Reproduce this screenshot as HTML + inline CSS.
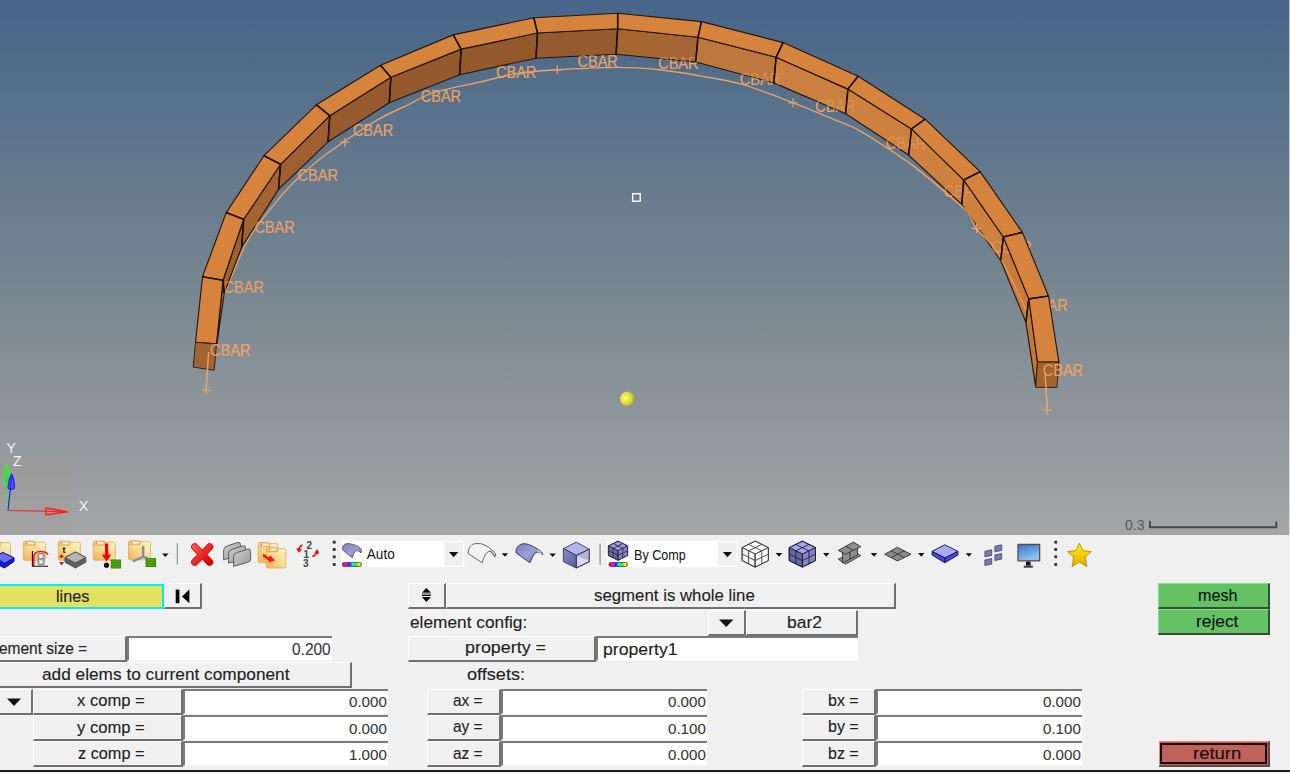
<!DOCTYPE html>
<html><head><meta charset="utf-8"><style>
*{margin:0;padding:0;box-sizing:border-box}
html,body{width:1290px;height:773px;overflow:hidden;background:#f0f0f0;font-family:"Liberation Sans",sans-serif;position:relative}
.a{position:absolute}
.btn{position:absolute;background:#f0f0f0;border-top:1px solid #fff;border-left:1px solid #fff;border-bottom:2px solid #707070;border-right:2px solid #707070}
.inp{position:absolute;background:#fff;border-top:2px solid #7a7a7a;border-left:2px solid #7a7a7a;border-bottom:1px solid #f6f6f6}
.t{position:absolute;white-space:pre;transform-origin:0 0;-webkit-text-stroke:0.12px currentColor}
.btn.g{background:#62c264;border-top-color:#86e086;border-left-color:#86e086;border-bottom-color:#3a4a3a;border-right-color:#3a4a3a}
.btn.r{background:#c0625a;border-top-color:#e08a84;border-left-color:#e08a84;border-bottom-color:#5a4a4a;border-right-color:#5a4a4a}
</style></head><body>
<div class="a" style="left:1289px;top:0;width:1px;height:535px;background:linear-gradient(#b4bcc8,#dcdcdc)"></div>
<div class="a" style="left:0;top:0;width:1290px;height:535px;overflow:hidden">
<svg width="1289" height="535" viewBox="0 0 1289 535" style="position:absolute;left:0;top:0">
<defs><linearGradient id="bg" x1="0" y1="0" x2="0" y2="1">
<stop offset="0" stop-color="#466589"/><stop offset="0.5" stop-color="#74848f"/><stop offset="1" stop-color="#a5a5a5"/></linearGradient>
<linearGradient id="tri" x1="0" y1="0" x2="0" y2="1"><stop offset="0" stop-color="#999999"/><stop offset="1" stop-color="#a4a4a4"/></linearGradient>
<radialGradient id="ball" cx="0.35" cy="0.45" r="0.7"><stop offset="0" stop-color="#ffff60"/><stop offset="0.6" stop-color="#d8d840"/><stop offset="1" stop-color="#a0a030"/></radialGradient>
</defs>
<rect width="1289" height="535" fill="url(#bg)"/>
<path d="M206.1,390.1 C206.3,385.9 207.1,371.7 207.5,365.0 C207.9,358.3 207.8,356.2 208.6,350.0 C209.3,343.8 209.6,336.7 212.0,328.0 C214.4,319.3 217.0,312.7 223.0,298.0 C229.0,283.3 238.9,256.3 248.0,240.0 C257.1,223.7 269.4,210.3 277.8,200.0 C286.2,189.7 290.9,185.1 298.2,178.0 C305.5,170.9 313.7,163.8 321.5,157.7 C329.3,151.6 335.8,147.3 344.8,141.2 C353.9,135.0 365.8,126.6 375.8,120.8 C385.8,115.0 395.2,111.0 404.9,106.3 C414.6,101.6 421.5,96.8 434.0,92.7 C446.5,88.7 465.7,85.3 480.0,82.0 C494.3,78.7 507.1,74.9 520.0,72.9 C532.9,70.9 541.2,70.7 557.2,69.8 C573.2,68.9 599.1,67.4 616.1,67.4 C633.1,67.4 645.5,68.4 659.5,69.8 C673.5,71.2 686.4,73.5 700.0,75.9 C713.6,78.3 725.9,79.7 741.4,84.2 C756.9,88.7 776.7,96.5 793.1,102.8 C809.5,109.1 829.2,117.3 840.0,121.8 C850.8,126.3 852.1,126.7 858.1,129.9 C864.1,133.1 870.2,137.0 876.2,140.8 C882.2,144.6 888.2,148.5 894.3,152.6 C900.3,156.7 906.5,160.8 912.5,165.3 C918.5,169.8 924.6,174.7 930.6,179.7 C936.6,184.7 942.7,189.8 948.7,195.1 C954.7,200.4 962.1,205.8 966.8,211.4 C971.5,217.0 972.3,222.4 976.8,228.5 C981.3,234.6 988.8,240.4 994.0,247.7 C999.2,254.9 1002.6,261.5 1008.0,272.0 C1013.4,282.5 1021.0,297.5 1026.3,310.5 C1031.6,323.5 1036.9,339.1 1040.0,350.0 C1043.1,360.9 1043.8,365.7 1045.0,375.7 C1046.2,385.7 1047.0,404.2 1047.4,409.9" fill="none" stroke="#e9a064" stroke-width="1.4"/>
<path d="M201.6,390.1h9M206.1,385.6v9" stroke="#e9a064" stroke-width="1.3"/><path d="M340.3,142.2h9M344.8,137.7v9" stroke="#e9a064" stroke-width="1.3"/><path d="M552.7,69.8h9M557.2,65.3v9" stroke="#e9a064" stroke-width="1.3"/><path d="M788.6,102.8h9M793.1,98.3v9" stroke="#e9a064" stroke-width="1.3"/><path d="M972.3,228.5h9M976.8,224.0v9" stroke="#e9a064" stroke-width="1.3"/><path d="M1042.9,409.9h9M1047.4,405.4v9" stroke="#e9a064" stroke-width="1.3"/>
<g font-family="Liberation Sans, sans-serif" font-size="16" fill="#e6a068"><text x="210.1" y="355.9" textLength="40.3" lengthAdjust="spacingAndGlyphs">CBAR</text><text x="223.6" y="292.8" textLength="40.3" lengthAdjust="spacingAndGlyphs">CBAR</text><text x="254.4" y="233.1" textLength="40.3" lengthAdjust="spacingAndGlyphs">CBAR</text><text x="297.6" y="181.0" textLength="40.3" lengthAdjust="spacingAndGlyphs">CBAR</text><text x="352.9" y="136.3" textLength="40.3" lengthAdjust="spacingAndGlyphs">CBAR</text><text x="420.8" y="102.4" textLength="40.3" lengthAdjust="spacingAndGlyphs">CBAR</text><text x="496.0" y="78.3" textLength="40.3" lengthAdjust="spacingAndGlyphs">CBAR</text><text x="577.5" y="66.7" textLength="40.3" lengthAdjust="spacingAndGlyphs">CBAR</text><text x="658.2" y="69.0" textLength="40.3" lengthAdjust="spacingAndGlyphs">CBAR</text><text x="739.8" y="85.2" textLength="40.3" lengthAdjust="spacingAndGlyphs">CBAR</text><text x="815.3" y="112.1" textLength="40.3" lengthAdjust="spacingAndGlyphs">CBAR</text><text x="885.7" y="149.4" textLength="40.3" lengthAdjust="spacingAndGlyphs">CBAR</text><text x="943.7" y="197.0" textLength="40.3" lengthAdjust="spacingAndGlyphs">CBAR</text><text x="991.4" y="253.0" textLength="40.3" lengthAdjust="spacingAndGlyphs">CBAR</text><text x="1027.4" y="310.5" textLength="40.3" lengthAdjust="spacingAndGlyphs">CBAR</text><text x="1042.8" y="375.7" textLength="40.3" lengthAdjust="spacingAndGlyphs">CBAR</text></g>
<polygon points="216.5,343.9 223.0,280.2 224.3,293.0 216.8,344.5" fill="#a0602e" stroke="#24160c" stroke-width="1.15" stroke-linejoin="round"/>
<polygon points="223.0,280.2 243.7,219.3 241.7,247.0 224.3,293.0" fill="#a0602e" stroke="#24160c" stroke-width="1.15" stroke-linejoin="round"/>
<polygon points="243.7,219.3 280.6,164.3 278.5,189.4 241.7,247.0" fill="#a56330" stroke="#24160c" stroke-width="1.15" stroke-linejoin="round"/>
<polygon points="280.6,164.3 329.8,115.7 328.1,141.8 278.5,189.4" fill="#9e6030" stroke="#24160c" stroke-width="1.15" stroke-linejoin="round"/>
<polygon points="329.8,115.7 390.9,77.3 389.3,102.7 328.1,141.8" fill="#965c2e" stroke="#24160c" stroke-width="1.15" stroke-linejoin="round"/>
<polygon points="390.9,77.3 461.1,49.1 459.6,74.7 389.3,102.7" fill="#945a2d" stroke="#24160c" stroke-width="1.15" stroke-linejoin="round"/>
<polygon points="461.1,49.1 537.5,33.0 536.0,58.2 459.6,74.7" fill="#93592d" stroke="#24160c" stroke-width="1.15" stroke-linejoin="round"/>
<polygon points="537.5,33.0 617.7,28.7 616.1,54.3 536.0,58.2" fill="#955a2d" stroke="#24160c" stroke-width="1.15" stroke-linejoin="round"/>
<polygon points="617.7,28.7 698.0,37.2 695.7,62.0 616.1,54.3" fill="#a66634" stroke="#24160c" stroke-width="1.15" stroke-linejoin="round"/>
<polygon points="698.0,37.2 776.1,57.3 773.8,82.9 695.7,62.0" fill="#be783e" stroke="#24160c" stroke-width="1.15" stroke-linejoin="round"/>
<polygon points="776.1,57.3 847.9,89.1 845.7,113.7 773.8,82.9" fill="#c98040" stroke="#24160c" stroke-width="1.15" stroke-linejoin="round"/>
<polygon points="847.9,89.1 911.5,128.9 908.6,155.1 845.7,113.7" fill="#ce803e" stroke="#24160c" stroke-width="1.15" stroke-linejoin="round"/>
<polygon points="911.5,128.9 963.7,180.1 961.8,204.5 908.6,155.1" fill="#ce803e" stroke="#24160c" stroke-width="1.15" stroke-linejoin="round"/>
<polygon points="963.7,180.1 1003.4,237.0 1000.7,260.5 961.8,204.5" fill="#ce803e" stroke="#24160c" stroke-width="1.15" stroke-linejoin="round"/>
<polygon points="1003.4,237.0 1028.8,298.9 1025.9,322.4 1000.7,260.5" fill="#c87c3c" stroke="#24160c" stroke-width="1.15" stroke-linejoin="round"/>
<polygon points="1028.8,298.9 1037.5,362.1 1035.6,386.4 1025.9,322.4" fill="#c4783a" stroke="#24160c" stroke-width="1.15" stroke-linejoin="round"/>
<path d="M912.5,165.3 C915.5,167.7 924.6,174.7 930.6,179.7 C936.6,184.7 942.7,189.8 948.7,195.1 C954.7,200.4 962.1,205.8 966.8,211.4 C971.5,217.0 972.3,222.4 976.8,228.5 C981.3,234.6 988.8,240.4 994.0,247.7 C999.2,254.9 1002.6,261.5 1008.0,272.0 C1013.4,282.5 1023.2,304.1 1026.3,310.5" fill="none" stroke="#e9a064" stroke-width="1.3" opacity="0.85"/>
<g font-family="Liberation Sans, sans-serif" font-size="16" fill="#e6a068"><text x="210.1" y="355.9" textLength="40.3" lengthAdjust="spacingAndGlyphs" fill-opacity="0.6">CBAR</text><text x="223.6" y="292.8" textLength="40.3" lengthAdjust="spacingAndGlyphs" fill-opacity="0.6">CBAR</text><text x="254.4" y="233.1" textLength="40.3" lengthAdjust="spacingAndGlyphs" fill-opacity="0.6">CBAR</text><text x="297.6" y="181.0" textLength="40.3" lengthAdjust="spacingAndGlyphs" fill-opacity="0.6">CBAR</text><text x="352.9" y="136.3" textLength="40.3" lengthAdjust="spacingAndGlyphs" fill-opacity="0.6">CBAR</text><text x="420.8" y="102.4" textLength="40.3" lengthAdjust="spacingAndGlyphs" fill-opacity="0.6">CBAR</text><text x="496.0" y="78.3" textLength="40.3" lengthAdjust="spacingAndGlyphs" fill-opacity="0.6">CBAR</text><text x="577.5" y="66.7" textLength="40.3" lengthAdjust="spacingAndGlyphs" fill-opacity="0.6">CBAR</text><text x="658.2" y="69.0" textLength="40.3" lengthAdjust="spacingAndGlyphs" fill-opacity="0.6">CBAR</text><text x="739.8" y="85.2" textLength="40.3" lengthAdjust="spacingAndGlyphs" fill-opacity="0.6">CBAR</text><text x="815.3" y="112.1" textLength="40.3" lengthAdjust="spacingAndGlyphs" fill-opacity="0.6">CBAR</text><text x="885.7" y="149.4" textLength="40.3" lengthAdjust="spacingAndGlyphs" fill-opacity="0.6">CBAR</text><text x="943.7" y="197.0" textLength="40.3" lengthAdjust="spacingAndGlyphs" fill-opacity="0.6">CBAR</text><text x="991.4" y="253.0" textLength="40.3" lengthAdjust="spacingAndGlyphs" fill-opacity="0.6">CBAR</text><text x="1027.4" y="310.5" textLength="40.3" lengthAdjust="spacingAndGlyphs" fill-opacity="0.6">CBAR</text><text x="1042.8" y="375.7" textLength="40.3" lengthAdjust="spacingAndGlyphs" fill-opacity="0.6">CBAR</text></g>
<polygon points="195.5,342.3 202.5,276.8 223.0,280.2 216.5,343.9" fill="#d6833e" stroke="#24160c" stroke-width="1.15" stroke-linejoin="round"/>
<polygon points="202.5,276.8 226.2,212.6 243.7,219.3 223.0,280.2" fill="#d6833e" stroke="#24160c" stroke-width="1.15" stroke-linejoin="round"/>
<polygon points="226.2,212.6 264.0,155.7 280.6,164.3 243.7,219.3" fill="#d6833e" stroke="#24160c" stroke-width="1.15" stroke-linejoin="round"/>
<polygon points="264.0,155.7 316.4,104.8 329.8,115.7 280.6,164.3" fill="#d6833e" stroke="#24160c" stroke-width="1.15" stroke-linejoin="round"/>
<polygon points="316.4,104.8 380.5,65.3 390.9,77.3 329.8,115.7" fill="#d6833e" stroke="#24160c" stroke-width="1.15" stroke-linejoin="round"/>
<polygon points="380.5,65.3 453.2,34.9 461.1,49.1 390.9,77.3" fill="#d6833e" stroke="#24160c" stroke-width="1.15" stroke-linejoin="round"/>
<polygon points="453.2,34.9 533.8,17.8 537.5,33.0 461.1,49.1" fill="#d6833e" stroke="#24160c" stroke-width="1.15" stroke-linejoin="round"/>
<polygon points="533.8,17.8 617.7,13.2 617.7,28.7 537.5,33.0" fill="#d6833e" stroke="#24160c" stroke-width="1.15" stroke-linejoin="round"/>
<polygon points="617.7,13.2 701.5,21.6 698.0,37.2 617.7,28.7" fill="#d6833e" stroke="#24160c" stroke-width="1.15" stroke-linejoin="round"/>
<polygon points="701.5,21.6 783.1,42.6 776.1,57.3 698.0,37.2" fill="#d6833e" stroke="#24160c" stroke-width="1.15" stroke-linejoin="round"/>
<polygon points="783.1,42.6 858.2,76.2 847.9,89.1 776.1,57.3" fill="#d6833e" stroke="#24160c" stroke-width="1.15" stroke-linejoin="round"/>
<polygon points="858.2,76.2 925.1,119.2 911.5,128.9 847.9,89.1" fill="#d6833e" stroke="#24160c" stroke-width="1.15" stroke-linejoin="round"/>
<polygon points="925.1,119.2 980.1,171.7 963.7,180.1 911.5,128.9" fill="#d6833e" stroke="#24160c" stroke-width="1.15" stroke-linejoin="round"/>
<polygon points="980.1,171.7 1022.4,232.4 1003.4,237.0 963.7,180.1" fill="#d6833e" stroke="#24160c" stroke-width="1.15" stroke-linejoin="round"/>
<polygon points="1022.4,232.4 1048.5,296.0 1028.8,298.9 1003.4,237.0" fill="#d6833e" stroke="#24160c" stroke-width="1.15" stroke-linejoin="round"/>
<polygon points="1048.5,296.0 1058.9,362.1 1037.5,362.1 1028.8,298.9" fill="#d6833e" stroke="#24160c" stroke-width="1.15" stroke-linejoin="round"/>
<polygon points="195.5,342.3 216.5,343.9 214.2,370.2 193.2,367.1" fill="#a26532" stroke="#2a1a10" stroke-width="0.9"/>
<polygon points="1037.5,362.1 1058.9,362.1 1056.9,387.4 1035.6,387.4" fill="#a26532" stroke="#2a1a10" stroke-width="0.9"/>
<polyline points="202.5,276.8 223.0,280.2 224.3,293.0" fill="none" stroke="#1e120a" stroke-width="1.6"/>
<polyline points="226.2,212.6 243.7,219.3 241.7,247.0" fill="none" stroke="#1e120a" stroke-width="1.6"/>
<polyline points="264.0,155.7 280.6,164.3 278.5,189.4" fill="none" stroke="#1e120a" stroke-width="1.6"/>
<polyline points="316.4,104.8 329.8,115.7 328.1,141.8" fill="none" stroke="#1e120a" stroke-width="1.6"/>
<polyline points="380.5,65.3 390.9,77.3 389.3,102.7" fill="none" stroke="#1e120a" stroke-width="1.6"/>
<polyline points="453.2,34.9 461.1,49.1 459.6,74.7" fill="none" stroke="#1e120a" stroke-width="1.6"/>
<polyline points="533.8,17.8 537.5,33.0 536.0,58.2" fill="none" stroke="#1e120a" stroke-width="1.6"/>
<polyline points="617.7,13.2 617.7,28.7 616.1,54.3" fill="none" stroke="#1e120a" stroke-width="1.6"/>
<polyline points="701.5,21.6 698.0,37.2 695.7,62.0" fill="none" stroke="#1e120a" stroke-width="1.6"/>
<polyline points="783.1,42.6 776.1,57.3 773.8,82.9" fill="none" stroke="#1e120a" stroke-width="1.6"/>
<polyline points="858.2,76.2 847.9,89.1 845.7,113.7" fill="none" stroke="#1e120a" stroke-width="1.6"/>
<polyline points="925.1,119.2 911.5,128.9 908.6,155.1" fill="none" stroke="#1e120a" stroke-width="1.6"/>
<polyline points="980.1,171.7 963.7,180.1 961.8,204.5" fill="none" stroke="#1e120a" stroke-width="1.6"/>
<polyline points="1022.4,232.4 1003.4,237.0 1000.7,260.5" fill="none" stroke="#1e120a" stroke-width="1.6"/>
<polyline points="1048.5,296.0 1028.8,298.9 1025.9,322.4" fill="none" stroke="#1e120a" stroke-width="1.6"/>
<g font-family="Liberation Sans, sans-serif" font-size="16" fill="#e6a068"><text x="210.1" y="355.9" textLength="40.3" lengthAdjust="spacingAndGlyphs">CBAR</text><text x="1042.8" y="375.7" textLength="40.3" lengthAdjust="spacingAndGlyphs">CBAR</text></g>
<path d="M206.1,390.1 L208.6,352" fill="none" stroke="#e9a064" stroke-width="1.4"/>
<path d="M972.3,228.5h9M976.8,224v9" stroke="#e9a064" stroke-width="1.3"/>
<path d="M1045,372 L1047.4,409.9" fill="none" stroke="#e9a064" stroke-width="1.4"/>
<rect x="632.7" y="193.7" width="7.5" height="7.5" fill="none" stroke="#f4f4f4" stroke-width="1.5"/>
<circle cx="627.3" cy="398.8" r="7.2" fill="url(#ball)"/>
<rect x="0" y="463" width="72" height="71" fill="url(#tri)"/>
<g stroke-width="1.2" fill="none">
<path d="M8,510.5 L67.6,511.7" stroke="#ff2020"/>
<path d="M46,508 L67.6,511.7 L46,514.8 Z" stroke="#ff2020" stroke-width="1.6"/>
<path d="M8,510.5 L6.8,466" stroke="#20ff20"/>
<path d="M3.5,483 C4,475 5.5,468 6.8,464 C8,468 9.5,475 9.8,483 L6.8,485 Z" stroke="#20ff20" fill="#40d040" fill-opacity="0.5"/>
<path d="M8,510.5 L11.7,476" stroke="#2020ff"/>
<path d="M8,488 C8.5,482 10.5,476 11.7,474.2 C12.8,476 14.5,482 14.5,488 C13,490 10,490 8,488 Z" stroke="#2020ff" fill="#3030f0" fill-opacity="0.7"/>
</g>
<g font-family="Liberation Sans, sans-serif" font-size="14" fill="#f4f4f4">
<text x="6.5" y="453">Y</text><text x="13" y="466">Z</text><text x="79" y="511">X</text></g>
<text x="1125" y="530" font-family="Liberation Sans, sans-serif" font-size="14" fill="#5a5a5a">0.3</text>
<path d="M1150,521 V527.2 H1276.3 V521.5" fill="none" stroke="#4a4a4a" stroke-width="2"/>
</svg>
</div>
<svg class="a" style="left:0;top:0" width="1290" height="773" viewBox="0 0 1290 773"><defs>
<linearGradient id="fg" x1="1" y1="0" x2="0" y2="1"><stop offset="0" stop-color="#fdf4c8"/><stop offset="0.5" stop-color="#f8dc90"/><stop offset="1" stop-color="#f0b050"/></linearGradient>
<linearGradient id="rb" x1="0" y1="0" x2="1" y2="0"><stop offset="0" stop-color="#ff0000"/><stop offset="0.2" stop-color="#ff00ff"/><stop offset="0.38" stop-color="#2020ff"/><stop offset="0.55" stop-color="#00ffff"/><stop offset="0.72" stop-color="#00ff00"/><stop offset="0.88" stop-color="#ffff00"/><stop offset="1" stop-color="#ffa000"/></linearGradient>
<linearGradient id="surf" x1="0" y1="0" x2="1" y2="1"><stop offset="0" stop-color="#7c7ec0"/><stop offset="0.5" stop-color="#9c9ed4"/><stop offset="1" stop-color="#6a6cae"/></linearGradient>
<linearGradient id="scr" x1="0" y1="0" x2="0.4" y2="1"><stop offset="0" stop-color="#3a78c8"/><stop offset="1" stop-color="#8cc4ec"/></linearGradient>
<linearGradient id="cubel" x1="0" y1="0" x2="1" y2="1"><stop offset="0" stop-color="#8a8ac8"/><stop offset="1" stop-color="#5e5e9c"/></linearGradient>
<linearGradient id="star" x1="0" y1="0" x2="0" y2="1"><stop offset="0" stop-color="#fff000"/><stop offset="1" stop-color="#eca800"/></linearGradient>
<linearGradient id="xg" x1="0" y1="0" x2="1" y2="1"><stop offset="0" stop-color="#ff5050"/><stop offset="1" stop-color="#d80000"/></linearGradient>
<linearGradient id="gf" x1="0" y1="0" x2="1" y2="1"><stop offset="0" stop-color="#d0d0d0"/><stop offset="1" stop-color="#989898"/></linearGradient>
</defs><rect x="-11.5" y="542.6" width="22.0" height="18.2" rx="1.6" fill="url(#fg)" stroke="#dcae62" stroke-width="0.8"/><path d="M-11.2,545.7 v-2.6 q0,-1.4 1.4,-1.4 h8.6 q1.4,0 1.4,1.4 v2.6 z" fill="#f2d084" stroke="#d4a458" stroke-width="0.8"/><rect x="-9.1" y="542.9" width="7.6" height="1.6" fill="#faf0e4"/><rect x="-9.1" y="542.9" width="1.6" height="1.6" fill="#f07070"/><path d="M-5,557.5 L2.6,552.5 L14,557.8 L14,561.5 L4.4,568 L-5,563 Z" fill="#1818e0" stroke="#000080" stroke-width="0.9" stroke-linejoin="round"/><path d="M-5,557.5 L2.6,552.5 L14,557.8 L4.8,563.2 Z" fill="#7070f4" stroke="#000080" stroke-width="0.7"/><rect x="23.4" y="542.1" width="22.0" height="18.2" rx="1.6" fill="url(#fg)" stroke="#dcae62" stroke-width="0.8"/><path d="M23.7,545.2 v-2.6 q0,-1.4 1.4,-1.4 h8.6 q1.4,0 1.4,1.4 v2.6 z" fill="#f2d084" stroke="#d4a458" stroke-width="0.8"/><rect x="25.8" y="542.4" width="7.6" height="1.6" fill="#faf0e4"/><rect x="25.8" y="542.4" width="1.6" height="1.6" fill="#f07070"/><path d="M32.4,551 V566.3 H48" fill="none" stroke="#111" stroke-width="1.1"/><path d="M38,553.5 h6 v11 h-6 z M38,559 h6" fill="#c0c0c0" stroke="#808080" stroke-width="1"/><rect x="39.6" y="554.8" width="2.8" height="2.8" fill="#f4f4f4"/><rect x="39.6" y="560.5" width="2.8" height="2.8" fill="#f4f4f4"/><path d="M33.8,566 L33.8,557.5 C33.8,553.5 36.5,551.4 40.5,551.4 C44.5,551.4 47,552.6 48,554.6" fill="none" stroke="#ff1010" stroke-width="1.5"/><rect x="58.3" y="542.1" width="22.0" height="18.2" rx="1.6" fill="url(#fg)" stroke="#dcae62" stroke-width="0.8"/><path d="M58.6,545.2 v-2.6 q0,-1.4 1.4,-1.4 h8.6 q1.4,0 1.4,1.4 v2.6 z" fill="#f2d084" stroke="#d4a458" stroke-width="0.8"/><rect x="60.7" y="542.4" width="7.6" height="1.6" fill="#faf0e4"/><rect x="60.7" y="542.4" width="1.6" height="1.6" fill="#f07070"/><text x="62.6" y="553.3" font-family="Liberation Sans" font-weight="bold" font-size="9" fill="#111">t</text><path d="M59.5,557 h4 M61.5,554.5 l-1.5,2.5 h3 z M59.5,562.5 h4 M61.5,565 l-1.5,-2.5 h3 z" stroke="#c01010" fill="#c01010" stroke-width="0.8"/><path d="M65,557.5 L75.5,552 L85.8,557.5 L85.8,562.2 L75.5,568 L65,562.2 Z" fill="#606060" stroke="#404040" stroke-width="0.8"/><path d="M65,557.5 L75.5,552 L85.8,557.5 L75.5,563 Z" fill="#b4b4b4" stroke="#404040" stroke-width="0.8"/><rect x="93.2" y="542.1" width="22.0" height="18.2" rx="1.6" fill="url(#fg)" stroke="#dcae62" stroke-width="0.8"/><path d="M93.5,545.2 v-2.6 q0,-1.4 1.4,-1.4 h8.6 q1.4,0 1.4,1.4 v2.6 z" fill="#f2d084" stroke="#d4a458" stroke-width="0.8"/><rect x="95.6" y="542.4" width="7.6" height="1.6" fill="#faf0e4"/><rect x="95.6" y="542.4" width="1.6" height="1.6" fill="#f07070"/><path d="M105,543.6 h3.2 v11 h3.2 l-4.8,7 l-4.8,-7 h3.2 z" fill="#ff0000"/><circle cx="106.5" cy="565.2" r="2.6" fill="#111"/><rect x="111.2" y="560" width="9.2" height="8" fill="#50b010" stroke="#2e7a00" stroke-width="0.9"/><path d="M112,562.7 h7.6 M112,565.3 h7.6" stroke="#2e7a00" stroke-width="0.9"/><rect x="128.5" y="541.6" width="22.0" height="18.2" rx="1.6" fill="url(#fg)" stroke="#dcae62" stroke-width="0.8"/><path d="M128.8,544.7 v-2.6 q0,-1.4 1.4,-1.4 h8.6 q1.4,0 1.4,1.4 v2.6 z" fill="#f2d084" stroke="#d4a458" stroke-width="0.8"/><rect x="130.9" y="541.9" width="7.6" height="1.6" fill="#faf0e4"/><rect x="130.9" y="541.9" width="1.6" height="1.6" fill="#f07070"/><path d="M143.1,546.4 V556.8 L132.7,561.4 M143.1,556.8 L147.5,558" stroke="#8088b8" stroke-width="2.2" fill="none"/><path d="M141.2,549.5 L143.1,545 L145,549.5 Z" fill="#8088b8"/><rect x="146" y="558.6" width="9.6" height="8" fill="#50b010" stroke="#2e7a00" stroke-width="0.9"/><path d="M146.8,561.3 h8 M146.8,563.9 h8" stroke="#2e7a00" stroke-width="0.9"/><path d="M162.0,553.4 h6.5 l-3.2,3.6 z" fill="#111"/><rect x="176.7" y="543.3" width="1.3" height="21" fill="#999"/><path d="M194.8,547 L209.6,562.2 M209.6,547 L194.8,562.2" stroke="#c81818" stroke-width="7.4" stroke-linecap="round"/><path d="M194.8,547 L209.6,562.2 M209.6,547 L194.8,562.2" stroke="url(#xg)" stroke-width="5.6" stroke-linecap="round"/><path d="M223.6,559.8 L223.6,550.3 Q223.6,546.8 227.6,545.8 L237.6,542.5 Q240.6,541.7 240.6,544.8 L240.6,553.3 Q240.6,554.8 237.6,555.8 Z" fill="url(#gf)" stroke="#505050" stroke-width="0.9"/><path d="M228.6,563.2 L228.6,553.7 Q228.6,550.2 232.6,549.2 L242.6,545.9 Q245.6,545.1 245.6,548.2 L245.6,556.7 Q245.6,558.2 242.6,559.2 Z" fill="url(#gf)" stroke="#505050" stroke-width="0.9"/><path d="M233.6,566.4 L233.6,556.9 Q233.6,553.4 237.6,552.4 L247.6,549.1 Q250.6,548.3 250.6,551.4 L250.6,559.9 Q250.6,561.4 247.6,562.4 Z" fill="url(#gf)" stroke="#505050" stroke-width="0.9"/><rect x="258.1" y="543.5" width="19.6" height="19.2" rx="1.6" fill="url(#fg)" stroke="#dcae62" stroke-width="0.8"/><path d="M258.4,546.6 v-2.6 q0,-1.4 1.4,-1.4 h8.6 q1.4,0 1.4,1.4 v2.6 z" fill="#f2d084" stroke="#d4a458" stroke-width="0.8"/><rect x="260.5" y="543.8" width="7.6" height="1.6" fill="#faf0e4"/><rect x="260.5" y="543.8" width="1.6" height="1.6" fill="#f07070"/><rect x="266.2" y="548.5" width="19.6" height="19.5" rx="1.6" fill="url(#fg)" stroke="#dcae62" stroke-width="0.8"/><path d="M266.5,551.6 v-2.6 q0,-1.4 1.4,-1.4 h8.6 q1.4,0 1.4,1.4 v2.6 z" fill="#f2d084" stroke="#d4a458" stroke-width="0.8"/><rect x="268.6" y="548.8" width="7.6" height="1.6" fill="#faf0e4"/><rect x="268.6" y="548.8" width="1.6" height="1.6" fill="#f07070"/><path d="M263.5,553.5 L268.5,557.5 L270,555.2 L275,560.5 L268,562.8 L269,560.8 L262.8,556.5 Z" fill="#ff1010"/><g font-family="Liberation Sans" font-weight="bold" font-size="10" fill="#444"><text x="306.5" y="549.4">2</text><text x="303.5" y="558.2">1</text><text x="303" y="566.8">3</text></g><path d="M302.5,545 Q299,546.5 298.8,550 M297,548.5 L299,551.5 L301.2,549" stroke="#e81010" stroke-width="1.6" fill="none"/><path d="M312.3,556.5 Q316,555.5 317,551.5 M315,553 L317.2,550.5 L318.4,553.8" stroke="#e81010" stroke-width="1.6" fill="none"/><rect x="332.8" y="540.8" width="2.8" height="2.8" fill="#303030"/><rect x="332.8" y="548.1" width="2.8" height="2.8" fill="#303030"/><rect x="332.8" y="555.4" width="2.8" height="2.8" fill="#303030"/><rect x="332.8" y="563.1" width="2.8" height="2.8" fill="#303030"/><rect x="1054.3" y="540.8" width="2.8" height="2.8" fill="#303030"/><rect x="1054.3" y="548.1" width="2.8" height="2.8" fill="#303030"/><rect x="1054.3" y="555.4" width="2.8" height="2.8" fill="#303030"/><rect x="1054.3" y="563.1" width="2.8" height="2.8" fill="#303030"/><rect x="341" y="540.8" width="123.2" height="26.3" fill="#fff"/><rect x="444.3" y="542" width="18.7" height="23.6" fill="#efefef"/><path d="M449.0,552.0 h9.3 l-4.7,5.2 z" fill="#111"/><path d="M342.2,549.6 C342.5,545 345,543.6 347.5,543.6 C351,543.6 354,544.5 357,546 C359.5,547.3 361.5,548.8 361.7,550.6 L361,553 C359.5,551.5 358,550.6 356.6,550.6 C354.5,551.5 353,554.5 352.4,558 Z" fill="url(#surf)" stroke="#4a4c78" stroke-width="0.8"/><rect x="342.4" y="562.4" width="19.0" height="4.0" rx="1.5" fill="url(#rb)" stroke="#444" stroke-width="0.8"/><text x="366.8" y="559.4" font-family="Liberation Sans" font-size="15" fill="#111" transform="translate(366.8,0) scale(0.905,1) translate(-366.8,0)">Auto</text><path d="M468.2,553.5 C468,548 471.5,543.6 476,543.6 L480.3,543.6 C484,544.5 488,546.5 490.9,549.2 C494,551.5 495.8,553.5 495.8,556 L494.6,556.6 C493,553.5 491,551.2 489.6,551 C486,552.5 484,556 482.2,562.8 Z M489.6,551 C492,552 494,554 494.6,556.6" fill="#f4f4f4" stroke="#505050" stroke-width="0.9"/><path d="M501.7,553.2 h6.5 l-3.2,3.6 z" fill="#111"/><path d="M515.9,552.7 C515.9,548 518.5,544.5 523,543.8 C526,543.4 530,544.5 537.9,549.2 C541,551 542.8,553 542.8,554.7 C541.5,553 539.5,552 537.9,552 C535.5,552.5 533.5,554.5 533,556.1 L529.9,562.8 Z" fill="url(#surf)" stroke="#303048" stroke-width="0.9"/><path d="M537.9,552 C539.5,552 541.5,553 542.8,554.7 C541,552 539,550 537.9,549.2" fill="#d0d0e0"/><path d="M549.4,553.4 h6.5 l-3.2,3.6 z" fill="#111"/><g stroke="#3a3a58" stroke-width="0.9" stroke-linejoin="round"><polygon points="576.3,555.4 589.2,549.2 589.2,561.7 576.3,568" fill="#d8d8f4"/><polygon points="576.3,555.4 589.2,549.2 589.2,560.8" fill="#b4b4cc" stroke="none"/><polygon points="576.3,542.2 589.2,549.2 576.3,555.4 563.4,548.5" fill="#b4b4ec"/><polygon points="563.4,548.5 576.3,555.4 576.3,568 563.4,561.7" fill="url(#cubel)"/><polygon points="576.3,555.4 589.2,549.2 589.2,561.7 576.3,568" fill="none"/></g><rect x="599.4" y="543.6" width="1.4" height="21" fill="#999"/><rect x="607.1" y="540.8" width="130.3" height="26.3" fill="#fff"/><rect x="717.9" y="542" width="18.7" height="23.6" fill="#efefef"/><path d="M722.8,552.0 h9.3 l-4.7,5.2 z" fill="#111"/><g stroke="#2e2e4a" stroke-width="0.9"><polygon points="618.0,541.1 627.6,545.9 618.0,550.7 608.4,545.9" fill="#9c9edc"/><polygon points="608.4,545.9 618.0,550.7 618.0,560.3 608.4,555.5" fill="#6a6caa"/><polygon points="618.0,550.7 627.6,545.9 627.6,555.5 618.0,560.3" fill="#8486c4"/><line x1="613.2" y1="543.5" x2="622.8" y2="548.3"/><line x1="622.8" y1="543.5" x2="613.2" y2="548.3"/><line x1="613.2" y1="548.3" x2="613.2" y2="557.9"/><line x1="608.4" y1="550.7" x2="618.0" y2="555.5"/><line x1="622.8" y1="548.3" x2="622.8" y2="557.9"/><line x1="618.0" y1="555.5" x2="627.6" y2="550.7"/><line x1="618.0" y1="550.7" x2="618.0" y2="560.3"/><polygon points="618.0,541.1 627.6,545.9 627.6,555.5 618.0,560.3 608.4,555.5 608.4,545.9" fill="none"/></g><rect x="609.0" y="562.5" width="18.3" height="4.0" rx="1.5" fill="url(#rb)" stroke="#444" stroke-width="0.8"/><text x="634.1" y="559.7" font-family="Liberation Sans" font-size="15" fill="#111" transform="translate(634.1,0) scale(0.838,1) translate(-634.1,0)">By Comp</text><g stroke="#404040" stroke-width="0.9"><polygon points="755.2,541.1 768.4,547.6 755.2,554.1 742.1,547.6" fill="#fafafa"/><polygon points="742.1,547.6 755.2,554.1 755.2,567.1 742.1,560.6" fill="#f4f4f4"/><polygon points="755.2,554.1 768.4,547.6 768.4,560.6 755.2,567.1" fill="#f8f8f8"/><line x1="748.6" y1="544.4" x2="761.8" y2="550.9"/><line x1="761.8" y1="544.4" x2="748.6" y2="550.9"/><line x1="748.6" y1="550.9" x2="748.6" y2="563.9"/><line x1="742.1" y1="554.1" x2="755.2" y2="560.6"/><line x1="761.8" y1="550.9" x2="761.8" y2="563.9"/><line x1="755.2" y1="560.6" x2="768.4" y2="554.1"/><line x1="755.2" y1="554.1" x2="755.2" y2="567.1"/><polygon points="755.2,541.1 768.4,547.6 768.4,560.6 755.2,567.1 742.1,560.6 742.1,547.6" fill="none"/></g><path d="M775.7,553.1 h6.5 l-3.2,3.6 z" fill="#111"/><g stroke="#202038" stroke-width="0.9"><polygon points="802.4,541.1 815.5,547.6 802.4,554.1 789.2,547.6" fill="#a4a6e8"/><polygon points="789.2,547.6 802.4,554.1 802.4,567.1 789.2,560.6" fill="#6466a8"/><polygon points="802.4,554.1 815.5,547.6 815.5,560.6 802.4,567.1" fill="#8284c4"/><line x1="795.8" y1="544.4" x2="809.0" y2="550.9"/><line x1="809.0" y1="544.4" x2="795.8" y2="550.9"/><line x1="795.8" y1="550.9" x2="795.8" y2="563.9"/><line x1="789.2" y1="554.1" x2="802.4" y2="560.6"/><line x1="809.0" y1="550.9" x2="809.0" y2="563.9"/><line x1="802.4" y1="560.6" x2="815.5" y2="554.1"/><line x1="802.4" y1="554.1" x2="802.4" y2="567.1"/><polygon points="802.4,541.1 815.5,547.6 815.5,560.6 802.4,567.1 789.2,560.6 789.2,547.6" fill="none"/></g><path d="M823.0,553.1 h6.5 l-3.2,3.6 z" fill="#111"/><g fill="#8e8e8e" stroke="#2e2e2e" stroke-width="0.9" stroke-linejoin="round"><polygon points="838.3,559.3 853.5,551.2 860.7,555.6 845.6,564.2"/><polygon points="842.6,552.5 857.6,544.5 857.6,555 842.6,563"/><line x1="850.1" y1="548.5" x2="850.1" y2="559"/><polygon points="838.3,550.4 853.5,542.1 860.7,546.7 845.6,554.2"/><line x1="845.9" y1="546.2" x2="853.1" y2="550.4"/></g><path d="M870.7,553.1 h6.5 l-3.2,3.6 z" fill="#111"/><g stroke="#303030" stroke-width="0.9"><polygon points="884.7,554.3 897.4,547.3 911,554.3 897.4,560.9" fill="#8c8c8c"/><path d="M891.1,550.8 L904.2,557.6 M904.2,550.8 L891.1,557.6"/></g><path d="M918.0,553.1 h6.5 l-3.2,3.6 z" fill="#111"/><g stroke="#101030" stroke-width="0.9"><polygon points="932.1,551.3 944.8,557.8 957.9,551.3 957.9,555 944.8,562.8 932.1,555" fill="#4444f0"/><polygon points="944.8,544.8 957.9,551.3 944.8,557.8 932.1,551.3" fill="#aaaaf2"/><line x1="944.8" y1="557.8" x2="944.8" y2="562.8"/></g><path d="M965.6,553.2 h6.5 l-3.2,3.6 z" fill="#111"/><polygon points="984.9,551.3 991.7,549.8 991.7,555.4 984.9,556.8" fill="#7a7ab4" stroke="#40406a" stroke-width="0.8"/><polygon points="984.9,560.0 991.7,558.5 991.7,564.1 984.9,565.5" fill="#7a7ab4" stroke="#40406a" stroke-width="0.8"/><polygon points="994.9,546.3 1001.7,544.8 1001.7,550.4 994.9,551.8" fill="#7a7ab4" stroke="#40406a" stroke-width="0.8"/><polygon points="994.9,555.0 1001.7,553.5 1001.7,559.1 994.9,560.5" fill="#7a7ab4" stroke="#40406a" stroke-width="0.8"/><rect x="1017.3" y="543.8" width="23" height="17.8" rx="1" fill="#505050"/><rect x="1018.6" y="545.2" width="20.4" height="15" fill="url(#scr)"/><rect x="1026" y="561.6" width="4.6" height="4" fill="#111"/><rect x="1023.6" y="565.4" width="9.4" height="2.4" rx="1" fill="#444"/><path d="M1079.4,543.2 L1082.9,550.6 L1091.3,551.6 L1085.1,557.1 L1086.8,566.6 L1079.4,562 L1072.1,566.6 L1073.7,557.1 L1067.6,551.6 L1075.9,550.6 Z" fill="url(#star)" stroke="#b08800" stroke-width="0.9" stroke-linejoin="round"/></svg>
<div class="a" style="left:-20px;top:584px;width:184px;height:25px;background:#e3e062;border:2px solid #00f0f0"></div>
<div class="btn" style="left:164.0px;top:583.0px;width:38.0px;height:26.0px;"></div>
<svg class="a" style="left:170px;top:585px" width="25" height="22"><rect x="5.7" y="4.6" width="3.7" height="13.6" fill="#000"/><path d="M19.4,4.6 L19.4,18.2 L12,11.4 Z" fill="#000"/></svg>
<div class="btn" style="left:408.0px;top:583.0px;width:38.0px;height:26.0px;"></div>
<svg class="a" style="left:416px;top:585px" width="20" height="20"><path d="M5.95,7.8 L10.35,3.1 L14.9,7.8 Z M5.95,12 L14.9,12 L10.35,17.1 Z" fill="#000"/><rect x="5.95" y="7.8" width="8.95" height="2" fill="#9a9a9a"/><rect x="5.95" y="9.8" width="8.95" height="1.2" fill="#111"/></svg>
<div class="btn" style="left:446.0px;top:583.0px;width:450.0px;height:26.0px;"></div>
<div class="btn g" style="left:1158.0px;top:583.0px;width:112.0px;height:26.0px;"></div>
<div class="btn" style="left:708.0px;top:610.0px;width:37.5px;height:26.0px;"></div>
<svg class="a" style="left:719px;top:619px" width="15" height="9"><path d="M0,0.5 L14.5,0.5 L7.25,8 Z" fill="#111"/></svg>
<div class="btn" style="left:745.5px;top:610.0px;width:112.5px;height:26.0px;"></div>
<div class="btn g" style="left:1158.0px;top:609.0px;width:112.0px;height:26.0px;"></div>
<div class="btn" style="left:-30.0px;top:636.0px;width:156.5px;height:26.0px;"></div>
<div class="inp" style="left:126.5px;top:636.0px;width:205.5px;height:25.0px;"></div>
<div class="btn" style="left:408.0px;top:636.0px;width:187.5px;height:26.0px;"></div>
<div class="inp" style="left:595.5px;top:636.0px;width:262.5px;height:25.0px;"></div>
<div class="btn" style="left:-20.0px;top:662.0px;width:372.0px;height:26.0px;"></div>
<div class="btn" style="left:-4px;top:689px;width:37px;height:26px"></div>
<svg class="a" style="left:7px;top:698px" width="15" height="9"><path d="M0,0.5 L14,0.5 L7,8 Z" fill="#111"/></svg>
<div class="btn" style="left:33.0px;top:689.0px;width:150.0px;height:26.0px;"></div>
<div class="inp" style="left:183.0px;top:689.0px;width:205.0px;height:25.0px;"></div>
<div class="btn" style="left:427.4px;top:689.0px;width:74.0px;height:26.0px;"></div>
<div class="inp" style="left:501.4px;top:689.0px;width:205.6px;height:25.0px;"></div>
<div class="btn" style="left:802.0px;top:689.0px;width:74.3px;height:26.0px;"></div>
<div class="inp" style="left:876.3px;top:689.0px;width:205.7px;height:25.0px;"></div>
<div class="btn" style="left:33.0px;top:715.0px;width:150.0px;height:26.0px;"></div>
<div class="inp" style="left:183.0px;top:715.0px;width:205.0px;height:25.0px;"></div>
<div class="btn" style="left:427.4px;top:715.0px;width:74.0px;height:26.0px;"></div>
<div class="inp" style="left:501.4px;top:715.0px;width:205.6px;height:25.0px;"></div>
<div class="btn" style="left:802.0px;top:715.0px;width:74.3px;height:26.0px;"></div>
<div class="inp" style="left:876.3px;top:715.0px;width:205.7px;height:25.0px;"></div>
<div class="btn" style="left:33.0px;top:741.0px;width:150.0px;height:26.0px;"></div>
<div class="inp" style="left:183.0px;top:741.0px;width:205.0px;height:25.0px;"></div>
<div class="btn" style="left:427.4px;top:741.0px;width:74.0px;height:26.0px;"></div>
<div class="inp" style="left:501.4px;top:741.0px;width:205.6px;height:25.0px;"></div>
<div class="btn" style="left:802.0px;top:741.0px;width:74.3px;height:26.0px;"></div>
<div class="inp" style="left:876.3px;top:741.0px;width:205.7px;height:25.0px;"></div>
<div class="btn r" style="left:1158.6px;top:741.0px;width:111.6px;height:26.0px;"></div>
<div class="a" style="left:1160px;top:742.5px;width:107px;height:21px;border:2px solid #1a0a0a"></div>
<div class="t" style="left:56.2px;top:587.61px;font-size:17px;line-height:17px;color:#222;transform:scaleX(0.952)">lines</div>
<div class="t" style="left:594.0px;top:587.41px;font-size:17px;line-height:17px;color:#222;transform:scaleX(0.989)">segment is whole line</div>
<div class="t" style="left:1197.6px;top:587.41px;font-size:17px;line-height:17px;color:#111;transform:scaleX(0.950)">mesh</div>
<div class="t" style="left:410.1px;top:613.61px;font-size:17px;line-height:17px;color:#222;transform:scaleX(1.017)">element config:</div>
<div class="t" style="left:787.2px;top:613.61px;font-size:17px;line-height:17px;color:#222;transform:scaleX(1.028)">bar2</div>
<div class="t" style="left:1196.4px;top:613.11px;font-size:17px;line-height:17px;color:#111;transform:scaleX(1.020)">reject</div>
<div class="t" style="left:-1.0px;top:639.71px;font-size:17px;line-height:17px;color:#222;transform:scaleX(0.910)">ement size =</div>
<div class="t" style="left:292.2px;top:642.06px;font-size:16px;line-height:16px;color:#383838;transform:scaleX(0.966)">0.200</div>
<div class="t" style="left:465.0px;top:639.21px;font-size:17px;line-height:17px;color:#222;transform:scaleX(1.052)">property =</div>
<div class="t" style="left:602.8px;top:641.31px;font-size:17px;line-height:17px;color:#222;transform:scaleX(1.039)">property1</div>
<div class="t" style="left:42.3px;top:666.41px;font-size:17px;line-height:17px;color:#222;transform:scaleX(1.015)">add elems to current component</div>
<div class="t" style="left:466.7px;top:665.61px;font-size:17px;line-height:17px;color:#222;transform:scaleX(1.064)">offsets:</div>
<div class="t" style="left:76.8px;top:692.41px;font-size:17px;line-height:17px;color:#222;transform:scaleX(0.976)">x comp =</div>
<div class="t" style="left:348.7px;top:694.40px;font-size:15px;line-height:15px;color:#383838;transform:scaleX(1.007)">0.000</div>
<div class="t" style="left:452.7px;top:691.91px;font-size:17px;line-height:17px;color:#222;transform:scaleX(0.905)">ax =</div>
<div class="t" style="left:667.8px;top:694.40px;font-size:15px;line-height:15px;color:#383838;transform:scaleX(1.007)">0.000</div>
<div class="t" style="left:827.5px;top:692.11px;font-size:17px;line-height:17px;color:#222;transform:scaleX(0.941)">bx =</div>
<div class="t" style="left:1042.7px;top:694.40px;font-size:15px;line-height:15px;color:#383838;transform:scaleX(1.009)">0.000</div>
<div class="t" style="left:76.8px;top:718.71px;font-size:17px;line-height:17px;color:#222;transform:scaleX(0.976)">y comp =</div>
<div class="t" style="left:348.7px;top:720.70px;font-size:15px;line-height:15px;color:#383838;transform:scaleX(1.007)">0.000</div>
<div class="t" style="left:452.7px;top:718.21px;font-size:17px;line-height:17px;color:#222;transform:scaleX(0.905)">ay =</div>
<div class="t" style="left:667.8px;top:720.70px;font-size:15px;line-height:15px;color:#383838;transform:scaleX(1.007)">0.100</div>
<div class="t" style="left:827.5px;top:718.41px;font-size:17px;line-height:17px;color:#222;transform:scaleX(0.941)">by =</div>
<div class="t" style="left:1042.7px;top:720.70px;font-size:15px;line-height:15px;color:#383838;transform:scaleX(1.009)">0.100</div>
<div class="t" style="left:78.1px;top:745.01px;font-size:17px;line-height:17px;color:#222;transform:scaleX(0.957)">z comp =</div>
<div class="t" style="left:348.7px;top:747.00px;font-size:15px;line-height:15px;color:#383838;transform:scaleX(1.007)">1.000</div>
<div class="t" style="left:452.7px;top:744.51px;font-size:17px;line-height:17px;color:#222;transform:scaleX(0.905)">az =</div>
<div class="t" style="left:667.8px;top:747.00px;font-size:15px;line-height:15px;color:#383838;transform:scaleX(1.007)">0.000</div>
<div class="t" style="left:827.5px;top:744.71px;font-size:17px;line-height:17px;color:#222;transform:scaleX(0.941)">bz =</div>
<div class="t" style="left:1042.7px;top:747.00px;font-size:15px;line-height:15px;color:#383838;transform:scaleX(1.009)">0.000</div>
<div class="t" style="left:1192.9px;top:744.51px;font-size:17px;line-height:17px;color:#111;transform:scaleX(1.087)">return</div>
<div class="a" style="left:0;top:770px;width:1290px;height:2px;background:#1c1c1c"></div>
</body></html>
